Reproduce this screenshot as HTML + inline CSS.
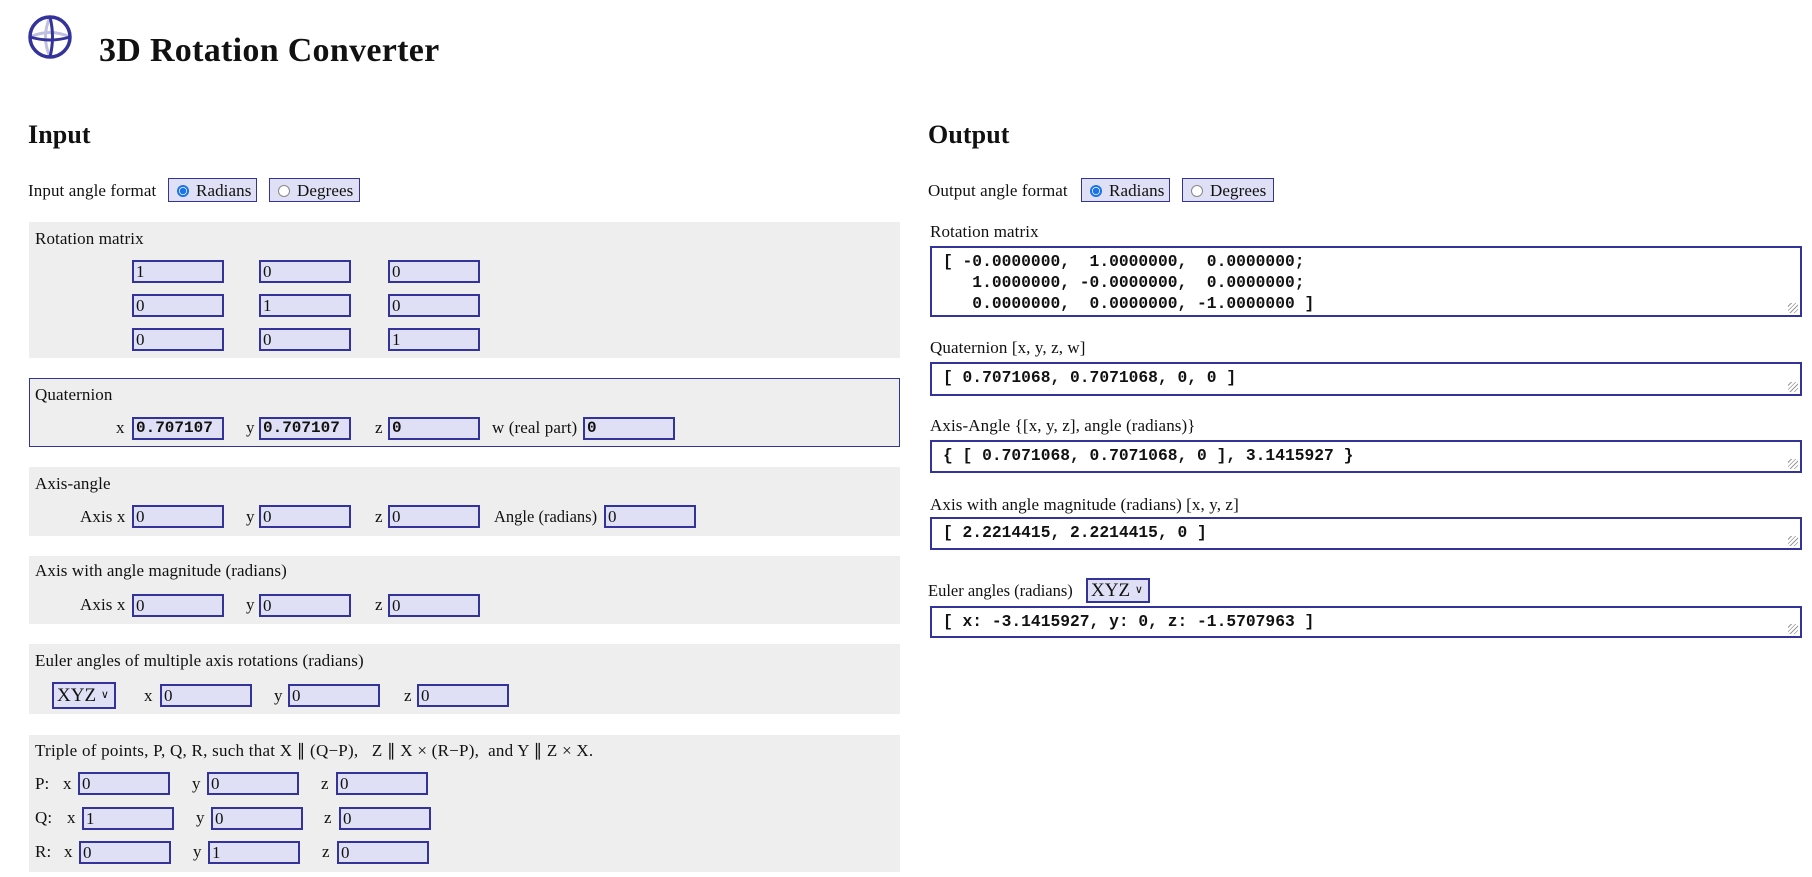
<!DOCTYPE html>
<html><head><meta charset="utf-8"><style>
body{margin:0;width:1812px;height:877px;background:#fff;font-family:"Liberation Serif",serif;font-size:17px;letter-spacing:0.1px;color:#111;position:relative;overflow:hidden}
.a{position:absolute;white-space:nowrap;line-height:20px}
.p{position:absolute;left:29px;width:871px;background:#eee}
.i{position:absolute;width:86px;height:19px;background:#dfdff5;border:2px solid #33339a;box-sizing:content-box;font-family:"Liberation Serif",serif;font-size:17px;letter-spacing:0;line-height:19px;padding-left:2px}
.b{font-family:"Liberation Mono",monospace;font-weight:bold;font-size:16px}
.rb{position:absolute;height:24px;background:#dfdff5;border:1px solid #33339a;line-height:24px;padding-left:8px;box-sizing:border-box;white-space:nowrap}
.rad{display:inline-block;width:12px;height:12px;border-radius:50%;border:1px solid #888;background:#fff;vertical-align:-1px;margin-right:7px;box-sizing:border-box}
.rad.on{border:2px solid #1a73e8;background:radial-gradient(circle,#1a73e8 0 3px,#fff 3.5px)}
.t{position:absolute;left:930px;width:872px;border:2px solid #33339a;box-sizing:border-box;font-family:"Liberation Mono",monospace;font-weight:bold;font-size:16.3px;letter-spacing:0;line-height:21px;padding:3px 11px 3px;white-space:pre}
.sel{position:absolute;background:#dfdff5;border:2px solid #33339a;box-sizing:border-box;font-size:19px;letter-spacing:0;line-height:22px;padding-left:3px;white-space:nowrap}
.gr{position:absolute;right:2px;bottom:2px;width:10px;height:10px;background:repeating-linear-gradient(135deg,transparent 0 2px,#999 2px 3px)}
</style></head><body>
<svg style="position:absolute;left:27px;top:14px" width="46" height="46" viewBox="0 0 46 46">
<path d="M23 3 Q14 23 23 43" fill="none" stroke="#c0c0e0" stroke-width="3"/>
<path d="M3 23 Q23 14 43 23" fill="none" stroke="#c0c0e0" stroke-width="3"/>
<path d="M23 3 Q28 23 23 43" fill="none" stroke="#33339a" stroke-width="3"/>
<path d="M3 23 Q23 29 43 23" fill="none" stroke="#33339a" stroke-width="3"/>
<circle cx="23" cy="23" r="20" fill="none" stroke="#33339a" stroke-width="3.5"/>
</svg>
<div class="a" style="left:99px;top:32px;font-size:34px;font-weight:bold;line-height:38px;letter-spacing:0.3px">3D Rotation Converter</div>
<div class="a" style="left:28px;top:120px;font-size:26px;font-weight:bold;line-height:30px">Input</div>
<div class="a" style="left:928px;top:120px;font-size:26px;font-weight:bold;line-height:30px">Output</div>

<div class="a" style="left:28px;top:181px">Input angle format</div>
<div class="rb" style="left:168px;top:178px;width:89px"><span class="rad on"></span>Radians</div>
<div class="rb" style="left:269px;top:178px;width:91px"><span class="rad"></span>Degrees</div>

<div class="p" style="top:222px;height:136px"></div>
<div class="a" style="left:35px;top:229px">Rotation matrix</div>
<div class="i" style="left:132px;top:260px">1</div><div class="i" style="left:259px;top:260px">0</div><div class="i" style="left:388px;top:260px">0</div>
<div class="i" style="left:132px;top:294px">0</div><div class="i" style="left:259px;top:294px">1</div><div class="i" style="left:388px;top:294px">0</div>
<div class="i" style="left:132px;top:328px">0</div><div class="i" style="left:259px;top:328px">0</div><div class="i" style="left:388px;top:328px">1</div>

<div class="p" style="top:378px;height:69px;border:1px solid #33339a;box-sizing:border-box"></div>
<div class="a" style="left:35px;top:385px">Quaternion</div>
<div class="a" style="left:116px;top:418px">x</div><div class="i b" style="left:132px;top:417px">0.707107</div>
<div class="a" style="left:246px;top:418px">y</div><div class="i b" style="left:259px;top:417px">0.707107</div>
<div class="a" style="left:375px;top:418px">z</div><div class="i b" style="left:388px;top:417px">0</div>
<div class="a" style="left:492px;top:418px">w (real part)</div><div class="i b" style="left:583px;top:417px">0</div>

<div class="p" style="top:467px;height:69px"></div>
<div class="a" style="left:35px;top:474px">Axis-angle</div>
<div class="a" style="left:80px;top:507px">Axis x</div><div class="i" style="left:132px;top:505px">0</div>
<div class="a" style="left:246px;top:507px">y</div><div class="i" style="left:259px;top:505px">0</div>
<div class="a" style="left:375px;top:507px">z</div><div class="i" style="left:388px;top:505px">0</div>
<div class="a" style="left:494px;top:507px;font-size:16.5px;letter-spacing:0">Angle (radians)</div><div class="i" style="left:604px;top:505px">0</div>

<div class="p" style="top:556px;height:68px"></div>
<div class="a" style="left:35px;top:561px">Axis with angle magnitude (radians)</div>
<div class="a" style="left:80px;top:595px">Axis x</div><div class="i" style="left:132px;top:594px">0</div>
<div class="a" style="left:246px;top:595px">y</div><div class="i" style="left:259px;top:594px">0</div>
<div class="a" style="left:375px;top:595px">z</div><div class="i" style="left:388px;top:594px">0</div>

<div class="p" style="top:644px;height:70px"></div>
<div class="a" style="left:35px;top:651px">Euler angles of multiple axis rotations (radians)</div>
<div class="sel" style="left:52px;top:682px;width:64px;height:27px">XYZ <span style="font-size:11px;vertical-align:3px">&#x2228;</span></div>
<div class="a" style="left:144px;top:686px">x</div><div class="i" style="left:160px;top:684px">0</div>
<div class="a" style="left:274px;top:686px">y</div><div class="i" style="left:288px;top:684px">0</div>
<div class="a" style="left:404px;top:686px">z</div><div class="i" style="left:417px;top:684px">0</div>

<div class="p" style="top:735px;height:137px"></div>
<div class="a" style="left:35px;top:741px;letter-spacing:0.25px">Triple of points, P, Q, R, such that X ∥ (Q−P),&nbsp;&nbsp; Z ∥ X × (R−P),&nbsp; and Y ∥ Z × X.</div>
<div class="a" style="left:35px;top:774px">P:</div><div class="a" style="left:63px;top:774px">x</div><div class="i" style="left:78px;top:772px">0</div>
<div class="a" style="left:192px;top:774px">y</div><div class="i" style="left:207px;top:772px">0</div>
<div class="a" style="left:321px;top:774px">z</div><div class="i" style="left:336px;top:772px">0</div>
<div class="a" style="left:35px;top:808px">Q:</div><div class="a" style="left:67px;top:808px">x</div><div class="i" style="left:82px;top:807px">1</div>
<div class="a" style="left:196px;top:808px">y</div><div class="i" style="left:211px;top:807px">0</div>
<div class="a" style="left:324px;top:808px">z</div><div class="i" style="left:339px;top:807px">0</div>
<div class="a" style="left:35px;top:842px">R:</div><div class="a" style="left:64px;top:842px">x</div><div class="i" style="left:79px;top:841px">0</div>
<div class="a" style="left:193px;top:842px">y</div><div class="i" style="left:208px;top:841px">1</div>
<div class="a" style="left:322px;top:842px">z</div><div class="i" style="left:337px;top:841px">0</div>

<div class="a" style="left:928px;top:181px">Output angle format</div>
<div class="rb" style="left:1081px;top:178px;width:89px"><span class="rad on"></span>Radians</div>
<div class="rb" style="left:1182px;top:178px;width:92px"><span class="rad"></span>Degrees</div>

<div class="a" style="left:930px;top:222px">Rotation matrix</div>
<div class="t" style="top:246px;height:71px">[ -0.0000000,  1.0000000,  0.0000000;
   1.0000000, -0.0000000,  0.0000000;
   0.0000000,  0.0000000, -1.0000000 ]<div class="gr"></div></div>
<div class="a" style="left:930px;top:338px">Quaternion [x, y, z, w]</div>
<div class="t" style="top:362px;height:34px">[ 0.7071068, 0.7071068, 0, 0 ]<div class="gr"></div></div>
<div class="a" style="left:930px;top:416px">Axis-Angle {[x, y, z], angle (radians)}</div>
<div class="t" style="top:440px;height:33px">{ [ 0.7071068, 0.7071068, 0 ], 3.1415927 }<div class="gr"></div></div>
<div class="a" style="left:930px;top:495px">Axis with angle magnitude (radians) [x, y, z]</div>
<div class="t" style="top:517px;height:33px">[ 2.2214415, 2.2214415, 0 ]<div class="gr"></div></div>
<div class="a" style="left:928px;top:581px;font-size:16.5px;letter-spacing:0">Euler angles (radians)</div>
<div class="sel" style="left:1086px;top:578px;width:64px;height:25px;line-height:21px">XYZ <span style="font-size:11px;vertical-align:3px">&#x2228;</span></div>
<div class="t" style="top:606px;height:32px">[ x: -3.1415927, y: 0, z: -1.5707963 ]<div class="gr"></div></div>
</body></html>
